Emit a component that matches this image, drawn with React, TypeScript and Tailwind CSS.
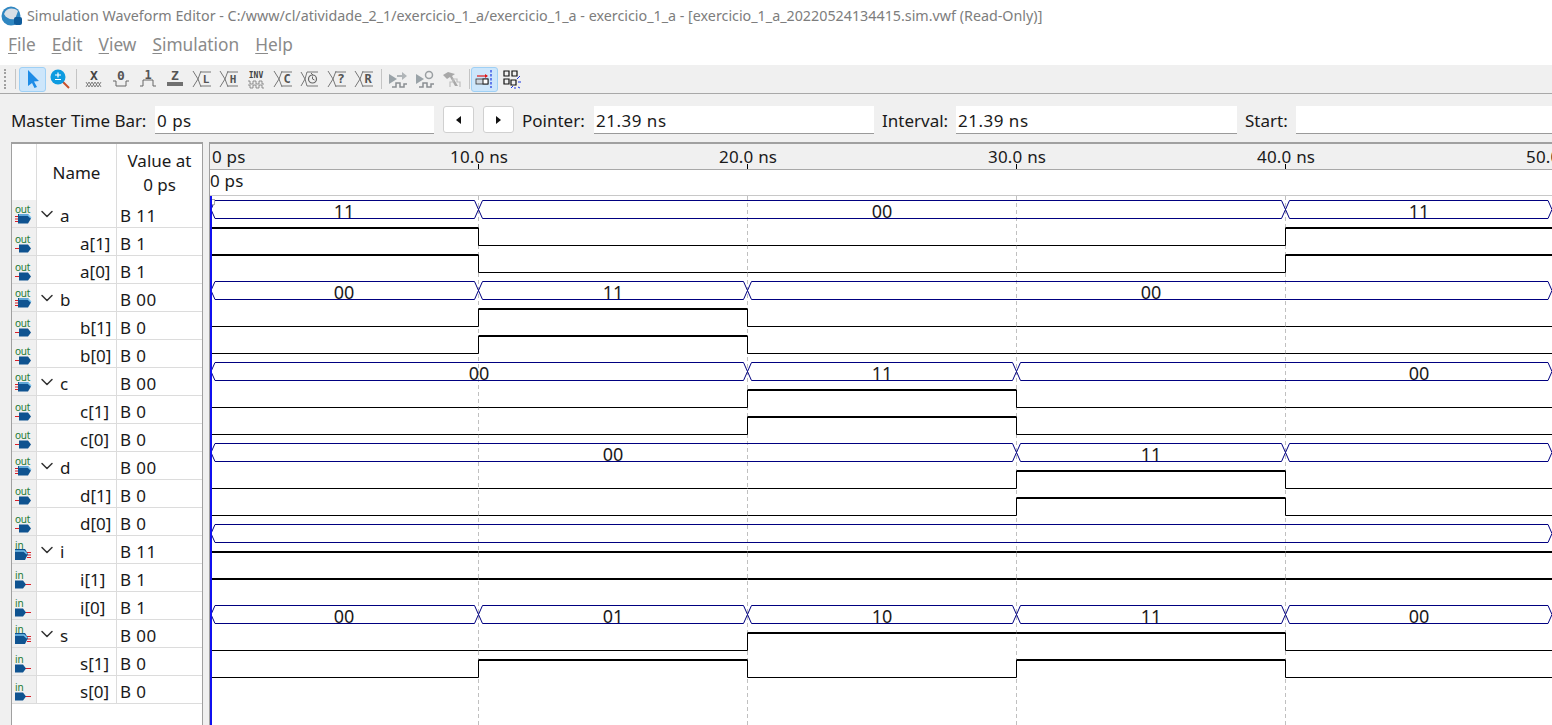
import { ChevronDown } from "lucide-react";

const T = [210, 478.5, 747.5, 1016.5, 1285.5, 1553];

type Level = 0 | 1;
type BusSeg = { from: number; to: number };

// bus group: top y, where the bus changes, labels, then the two bit waves
const groups: {
  y: number;
  cuts: number[];
  labels: [string, number][];
  bit1: Level[];
  bit0: Level[];
}[] = [
  { y: 200, cuts: [1, 4], labels: [["11", 344], ["00", 882], ["11", 1419]], bit1: [1, 0, 0, 0, 1], bit0: [1, 0, 0, 0, 1] },
  { y: 281, cuts: [1, 2], labels: [["00", 344], ["11", 613], ["00", 1151]], bit1: [0, 1, 0, 0, 0], bit0: [0, 1, 0, 0, 0] },
  { y: 362, cuts: [2, 3], labels: [["00", 479], ["11", 882], ["00", 1419]], bit1: [0, 0, 1, 0, 0], bit0: [0, 0, 1, 0, 0] },
  { y: 443, cuts: [3, 4], labels: [["00", 613], ["11", 1151]], bit1: [0, 0, 0, 1, 0], bit0: [0, 0, 0, 1, 0] },
  { y: 524, cuts: [], labels: [], bit1: [1, 1, 1, 1, 1], bit0: [1, 1, 1, 1, 1] },
  { y: 605, cuts: [1, 2, 3, 4], labels: [["00", 344], ["01", 613], ["10", 882], ["11", 1151], ["00", 1419]], bit1: [0, 0, 1, 1, 0], bit0: [0, 1, 0, 1, 0] },
];

const rows = [
  { name: "a", value: "B 11", group: true, dir: "out" },
  { name: "a[1]", value: "B 1", dir: "out" },
  { name: "a[0]", value: "B 1", dir: "out" },
  { name: "b", value: "B 00", group: true, dir: "out" },
  { name: "b[1]", value: "B 0", dir: "out" },
  { name: "b[0]", value: "B 0", dir: "out" },
  { name: "c", value: "B 00", group: true, dir: "out" },
  { name: "c[1]", value: "B 0", dir: "out" },
  { name: "c[0]", value: "B 0", dir: "out" },
  { name: "d", value: "B 00", group: true, dir: "out" },
  { name: "d[1]", value: "B 0", dir: "out" },
  { name: "d[0]", value: "B 0", dir: "out" },
  { name: "i", value: "B 11", group: true, dir: "in" },
  { name: "i[1]", value: "B 1", dir: "in" },
  { name: "i[0]", value: "B 1", dir: "in" },
  { name: "s", value: "B 00", group: true, dir: "in" },
  { name: "s[1]", value: "B 0", dir: "in" },
  { name: "s[0]", value: "B 0", dir: "in" },
];

function AppLogo() {
  return (
    <svg width="22" height="22" viewBox="0 0 22 22" className="ml-[1px] mr-[4px] shrink-0">
      <circle cx="10" cy="11" r="9.5" fill="#2f86c1" />
      <path d="M3 9 C5 3 12 2 17 6 L14 14 C9 15 5 13 3 9Z" fill="#d9dfe6" />
      <rect x="13" y="12" width="8" height="8" rx="2" fill="#0f5c9c" />
    </svg>
  );
}

function PinIcon({ dir, group }: { dir: string; group?: boolean }) {
  const out = dir === "out";
  return (
    <svg width="24" height="27" viewBox="0 0 24 27" className="block">
      <text x="3" y={group ? 13 : 15} fontSize="10" letterSpacing="-0.2" fill="#1d7a34">{dir}</text>
      {group ? (
        <>
          <path d={out ? "M3 16.5h4M3 19h4M3 21.5h4" : "M15 16.5h4M15 19h4M15 21.5h4"} stroke="#d8202a" strokeWidth="1" />
          <path d={out ? "M6 14h10l3 4.5-3 5H6Z" : "M3 13h10l3 5-3 6H3Z"} fill="#0f5390" />
          <path d={out ? "M7 15h9l3 3" : "M3 15h9l3 3"} stroke="#7cc4ee" strokeWidth="1.5" fill="none" />
        </>
      ) : (
        <>
          <path d={out ? "M3 20.5h5" : "M13 20.5h6"} stroke="#d8202a" strokeWidth="1" />
          <path d={out ? "M7 16.5h9l3 4-3 4H7Z" : "M3 16.5h8l3 4-3 4H3Z"} fill="#0f5390" />
        </>
      )}
    </svg>
  );
}

function TBtn({ children, active }: { children: React.ReactNode; active?: boolean }) {
  return (
    <div
      className={
        active
          ? "w-[27px] h-[25px] shrink-0 flex items-center justify-center rounded-[3px] border border-[#9fd0f5] bg-[#cde6fb]"
          : "w-[27px] h-[25px] shrink-0 flex items-center justify-center"
      }
    >
      {children}
    </div>
  );
}

function ToolSep() {
  return <div className="w-px h-[20px] bg-[#c4c4c4] shrink-0" />;
}

function BusLetter({ t, size = 11 }: { t: string; size?: number }) {
  return (
    <svg width="20" height="20" viewBox="0 0 20 20">
      <path d="M1 2 L6 10 L1 18 M9 2 L6 10 L9 18 M9 3h10M9 17h10" stroke="#777" strokeWidth="1" fill="none" />
      <text x="14" y="14" textAnchor="middle" fontSize={size} fontWeight="700" fontFamily="'DejaVu Sans Mono', monospace" fill="#555">{t}</text>
    </svg>
  );
}

function GrayWave({ badge }: { badge: string }) {
  return (
    <svg width="20" height="20" viewBox="0 0 20 20">
      <path d="M1 5l8 5-8 5Z" fill="#9aa3a8" />
      <path d="M4 18h4v-4h4v4h4v-3h3" stroke="#8a8f92" strokeWidth="1.5" fill="none" />
      {badge === "arrow" ? (
        <path d="M9 6h5V3l5 4-5 4V8H9Z" fill="#b0b5b8" />
      ) : (
        <circle cx="14" cy="6" r="3.5" fill="none" stroke="#9a9fa2" strokeWidth="1.5" />
      )}
    </svg>
  );
}

function Toolbar() {
  return (
    <div className="h-[29px] bg-[#f0f0f0] border-b border-[#a8a8a8] flex items-center pl-[4px]">
      <div className="w-[3px] h-[20px] mr-[8px] border-l-2 border-dotted border-[#a0a0a0]" />
      <ToolSep />
      <div className="w-[3px]" />
      <TBtn active>
        <svg width="16" height="20" viewBox="0 0 16 20">
          <path d="M3 1 L14 12 L9 12.5 L12 18 L9.5 19 L7 14 L3 17Z" fill="#1e8ce6" />
        </svg>
      </TBtn>
      <TBtn>
        <svg width="20" height="20" viewBox="0 0 20 20">
          <path d="M12 12l7 7" stroke="#c8502a" strokeWidth="2" />
          <circle cx="8" cy="8" r="7.5" fill="#0e9be0" />
          <path d="M5 6h6M8 3.5v5M5 10.5h6" stroke="#fff" strokeWidth="1.2" />
        </svg>
      </TBtn>
      <div className="w-[3px]" />
      <ToolSep />
      <div className="w-[3px]" />
      <TBtn>
        <svg width="20" height="20" viewBox="0 0 20 20">
          <text x="10" y="11" textAnchor="middle" fontSize="13" fontWeight="700" fontFamily="'DejaVu Sans Mono', monospace" fill="#444">X</text>
          <path d="M2 13l3 5 3-5 3 5 3-5 3 5M2 18l3-5 3 5 3-5 3 5 3-5" stroke="#666" strokeWidth="0.8" fill="none" />
        </svg>
      </TBtn>
      <TBtn>
        <svg width="20" height="20" viewBox="0 0 20 20">
          <text x="10" y="11" textAnchor="middle" fontSize="13" fontWeight="700" fontFamily="'DejaVu Sans Mono', monospace" fill="#555">0</text>
          <path d="M2 12h3v5h10v-5h3" stroke="#666" strokeWidth="1" fill="none" />
        </svg>
      </TBtn>
      <TBtn>
        <svg width="20" height="20" viewBox="0 0 20 20">
          <text x="10" y="10" textAnchor="middle" fontSize="12" fontWeight="700" fontFamily="'DejaVu Sans Mono', monospace" fill="#555">1</text>
          <path d="M2 17h3v-6h10v6h3" stroke="#666" strokeWidth="1" fill="none" />
        </svg>
      </TBtn>
      <TBtn>
        <svg width="20" height="20" viewBox="0 0 20 20">
          <text x="10" y="11" textAnchor="middle" fontSize="13" fontWeight="700" fontFamily="'DejaVu Sans Mono', monospace" fill="#555">Z</text>
          <rect x="2" y="13" width="16" height="4" fill="#707070" />
        </svg>
      </TBtn>
      <TBtn><BusLetter t="L" /></TBtn>
      <TBtn><BusLetter t="H" /></TBtn>
      <TBtn>
        <svg width="20" height="20" viewBox="0 0 20 20">
          <text x="10" y="9" textAnchor="middle" fontSize="8" fontWeight="700" fontFamily="'DejaVu Sans Mono', monospace" fill="#444">INV</text>
          <path d="M2 12h2v3h3v-3h3v3h3v-3h3v3h2M2 16h2v3h3v-3h3v3h3v-3h3v3h2" stroke="#777" strokeWidth="0.8" fill="none" />
        </svg>
      </TBtn>
      <TBtn><BusLetter t="C" size={12} /></TBtn>
      <TBtn>
        <svg width="20" height="20" viewBox="0 0 20 20">
          <path d="M1 3 L5 10 L1 17 M7 3 L5 10 L7 17 M7 3h11M7 17h11" stroke="#777" strokeWidth="1" fill="none" />
          <circle cx="12.5" cy="10" r="4" fill="none" stroke="#666" strokeWidth="1.2" />
          <path d="M12.5 7.5V10l2 1M11 4l2 2" stroke="#666" strokeWidth="1" fill="none" />
        </svg>
      </TBtn>
      <TBtn><BusLetter t="?" size={13} /></TBtn>
      <TBtn><BusLetter t="R" size={12} /></TBtn>
      <div className="w-[4px]" />
      <ToolSep />
      <div className="w-[2px]" />
      <TBtn><GrayWave badge="arrow" /></TBtn>
      <TBtn><GrayWave badge="clock" /></TBtn>
      <TBtn>
        <svg width="20" height="20" viewBox="0 0 20 20">
          <path d="M1 6l5-3 7 2-3 2 6 10h-3L8 8 5 10Z" fill="#a8a8a8" />
          <path d="M8 18v-5h3v-3h4v3h3v5" stroke="#c0c0c0" strokeWidth="1.2" fill="none" />
        </svg>
      </TBtn>
      <div className="w-[4px]" />
      <ToolSep />
      <div className="w-[1px]" />
      <TBtn active>
        <svg width="20" height="20" viewBox="0 0 20 20">
          <path d="M2 7h10" stroke="#e01818" strokeWidth="1.2" />
          <path d="M10 5l3 2-3 2Z" fill="#e01818" />
          <rect x="1" y="10" width="12" height="5" fill="#d0d8e0" stroke="#333" strokeWidth="0.8" />
          <rect x="8" y="10" width="5" height="5" fill="#fff" stroke="#222" strokeWidth="1" />
          <path d="M16 1v18" stroke="#1a34e0" strokeWidth="1.2" strokeDasharray="2.5 1.5" />
        </svg>
      </TBtn>
      <TBtn>
        <svg width="20" height="20" viewBox="0 0 20 20">
          <path d="M2 2h5v5H2ZM10 2h5v5h-5ZM2 10h5v5H2ZM9 11h5v5H9Z" fill="none" stroke="#111" strokeWidth="1.2" />
          <path d="M18 7l-3 3M9 19l2-2M16 18l2 1M16 13h3M13 18v2" stroke="#1a34e0" strokeWidth="1" />
        </svg>
      </TBtn>
    </div>
  );
}

function Field({ className }: { className: string }) {
  return <div className={`${className} h-[28px] bg-white border-b border-[#9a9a9a] shrink-0`} />;
}

function ValueField({ value, className }: { value: string; className: string }) {
  return (
    <div className={`${className} h-[28px] bg-white border-b border-[#9a9a9a] shrink-0 pl-[2px] leading-[30px] tracking-[0.5px]`}>
      {value}
    </div>
  );
}

function StepBtn({ right }: { right?: boolean }) {
  return (
    <div className="w-[31px] h-[27px] shrink-0 rounded-[3px] border border-[#d0d0d0] bg-white flex items-center justify-center">
      <svg width="5" height="8" viewBox="0 0 5 8">
        <path d={right ? "M0 0l5 4-5 4Z" : "M5 0L0 4l5 4Z"} fill="#111" />
      </svg>
    </div>
  );
}

function ControlBar() {
  return (
    <div className="h-[48px] bg-[#f0f0f0] flex items-start pt-[12px] pl-[11px] text-[17px] text-[#1a1a1a] whitespace-nowrap">
      <div className="w-[144px] shrink-0 leading-[30px] tracking-[-0.05px]">Master Time Bar:</div>
      <ValueField value="0 ps" className="w-[279px]" />
      <div className="w-[9px] shrink-0" />
      <StepBtn />
      <div className="w-[9px] shrink-0" />
      <StepBtn right />
      <div className="w-[8px] shrink-0" />
      <div className="w-[72px] shrink-0 leading-[30px]">Pointer:</div>
      <ValueField value="21.39 ns" className="w-[280px]" />
      <div className="w-[8px] shrink-0" />
      <div className="w-[74px] shrink-0 leading-[30px]">Interval:</div>
      <ValueField value="21.39 ns" className="w-[281px]" />
      <div className="w-[8px] shrink-0" />
      <div className="w-[51px] shrink-0 leading-[30px]">Start:</div>
      <Field className="w-[256px]" />
    </div>
  );
}

function SignalTable() {
  return (
    <div className="w-[192px] shrink-0 ml-[11px] h-full bg-white border-x border-t-2 border-[#a0a0a0] text-[17px] text-[#1a1a1a] box-border">
      <div className="h-[56px] grid grid-cols-[25px_80px_1fr]">
        <div className="border-r border-[#dcdcdc]" />
        <div className="border-r border-[#dcdcdc] flex items-center justify-center pt-[2px]">Name</div>
        <div className="flex flex-col items-center justify-center leading-[24px] pt-[1px]">
          <span>Value at</span>
          <span>0 ps</span>
        </div>
      </div>
      {rows.map((row) => (
        <div key={row.name} className="h-[28px] grid grid-cols-[25px_80px_1fr] grid-rows-[27px] border-b border-[#dcdcdc] box-border">
          <div className="bg-[#f0f0f0] border-r border-[#dcdcdc]">
            <PinIcon dir={row.dir} group={row.group} />
          </div>
          <div className="border-r border-[#dcdcdc] flex items-center pt-[4px]">
            {row.group ? (
              <>
                <ChevronDown size={20} strokeWidth={1.8} className="text-[#333] shrink-0 -mt-[3px]" />
                <span className="ml-[3px]">{row.name}</span>
              </>
            ) : (
              <span className="ml-[43px]">{row.name}</span>
            )}
          </div>
          <div className="pl-[3px] leading-[31px] tracking-[0.4px]">{row.value}</div>
        </div>
      ))}
    </div>
  );
}

function busSegments(cuts: number[]): BusSeg[] {
  const stops = [T[0], ...cuts.map((c) => T[c]), T[5]];
  return stops.slice(1).map((to, i) => ({ from: stops[i], to }));
}

function BitWave({ levels, high, low }: { levels: Level[]; high: number; low: number }) {
  return (
    <>
      {levels.map((lv, i) => (
        <line
          key={i}
          x1={T[i]}
          x2={T[i + 1]}
          y1={lv ? high : low}
          y2={lv ? high : low}
          stroke="#000"
          strokeWidth={lv ? 2 : 1}
        />
      ))}
      {levels.slice(1).map((lv, i) =>
        lv !== levels[i] ? (
          <line key={i} x1={T[i + 1]} x2={T[i + 1]} y1={high} y2={low} stroke="#000" strokeWidth="1" />
        ) : null
      )}
    </>
  );
}

function Waves() {
  return (
    <svg width="1342" height="529" viewBox="210 196 1342 529" className="block">
      {T.slice(1, 5).map((x) => (
        <line key={x} x1={x} x2={x} y1="196" y2="725" stroke="#c0c0c0" strokeWidth="1" strokeDasharray="4 3" />
      ))}
      {groups.map((g) => {
        const top = g.y + 0.5;
        const bot = g.y + 18.5;
        return (
          <g key={g.y}>
            {busSegments(g.cuts).map((s) => {
              const first = s.from === T[0];
              const last = s.to === T[5];
              const a = first ? s.from + 1 : s.from;
              const b = last ? s.to - 1 : s.to;
              return (
                <path
                  key={s.from}
                  d={`M${a} ${top + 9}L${a + 4} ${top}H${b - 4}L${b} ${top + 9}L${b - 4} ${bot}H${a + 4}Z`}
                  fill="none"
                  stroke="#000080"
                  strokeWidth="1"
                />
              );
            })}
            {g.labels.map(([t, x]) => (
              <text key={x} x={x} y={g.y + 17.5} textAnchor="middle" fontSize="18" fill="#1a1a1a">{t}</text>
            ))}
            <BitWave levels={g.bit1} high={g.y + 28} low={g.y + 45.5} />
            <BitWave levels={g.bit0} high={g.y + 55} low={g.y + 72.5} />
          </g>
        );
      })}
      <rect x="211.5" y="199.5" width="3" height="5" fill="#fff" stroke="#aaa" strokeWidth="1" />
      <line x1="211" x2="211" y1="196" y2="725" stroke="#1010f0" strokeWidth="2" />
    </svg>
  );
}

function WavePanel() {
  return (
    <div className="ml-[6px] flex-1 min-w-0 h-full bg-white border-l border-t-2 border-[#a0a0a0] text-[17px] text-[#1a1a1a] box-border overflow-hidden">
      <div className="h-[25px] bg-[#f0f0f0] border-b border-[#a8a8a8] flex whitespace-nowrap leading-[26px] tracking-[0.2px] box-content">
        <div className="w-[240px] pl-[2px] shrink-0">0 ps</div>
        {["10.0 ns", "20.0 ns", "30.0 ns", "40.0 ns", "50.0 ns"].map((t) => (
          <div key={t} className="w-[269px] shrink-0 relative">
            {t}
            {t !== "50.0 ns" && <span className="absolute left-[28px] top-[20px] w-px h-[5px] bg-black" />}
          </div>
        ))}
      </div>
      <div className="h-[26px] bg-white border-b border-[#c8c8c8] leading-[22px] tracking-[0.2px] box-border">0 ps</div>
      <Waves />
    </div>
  );
}

export default function App() {
  return (
    <div className="h-[725px] w-full overflow-hidden bg-[#f0f0f0] font-['Noto_Sans',sans-serif]">
      <div className="h-[30px] bg-white flex items-center pt-[1px] text-[14.3px] text-[#7d7d7d] whitespace-nowrap">
        <AppLogo />
        Simulation Waveform Editor - C:/www/cl/atividade_2_1/exercicio_1_a/exercicio_1_a - exercicio_1_a - [exercicio_1_a_20220524134415.sim.vwf (Read-Only)]
      </div>
      <div className="h-[35px] bg-white flex items-center gap-[16px] pl-[8px] pb-[6px] text-[17.3px] text-[#8a8a8a]">
        {["File", "Edit", "View", "Simulation", "Help"].map((m) => (
          <span key={m}>
            <span className="underline underline-offset-2">{m[0]}</span>
            {m.slice(1)}
          </span>
        ))}
      </div>
      <Toolbar />
      <ControlBar />
      <div className="h-[583px] flex">
        <SignalTable />
        <WavePanel />
      </div>
    </div>
  );
}
